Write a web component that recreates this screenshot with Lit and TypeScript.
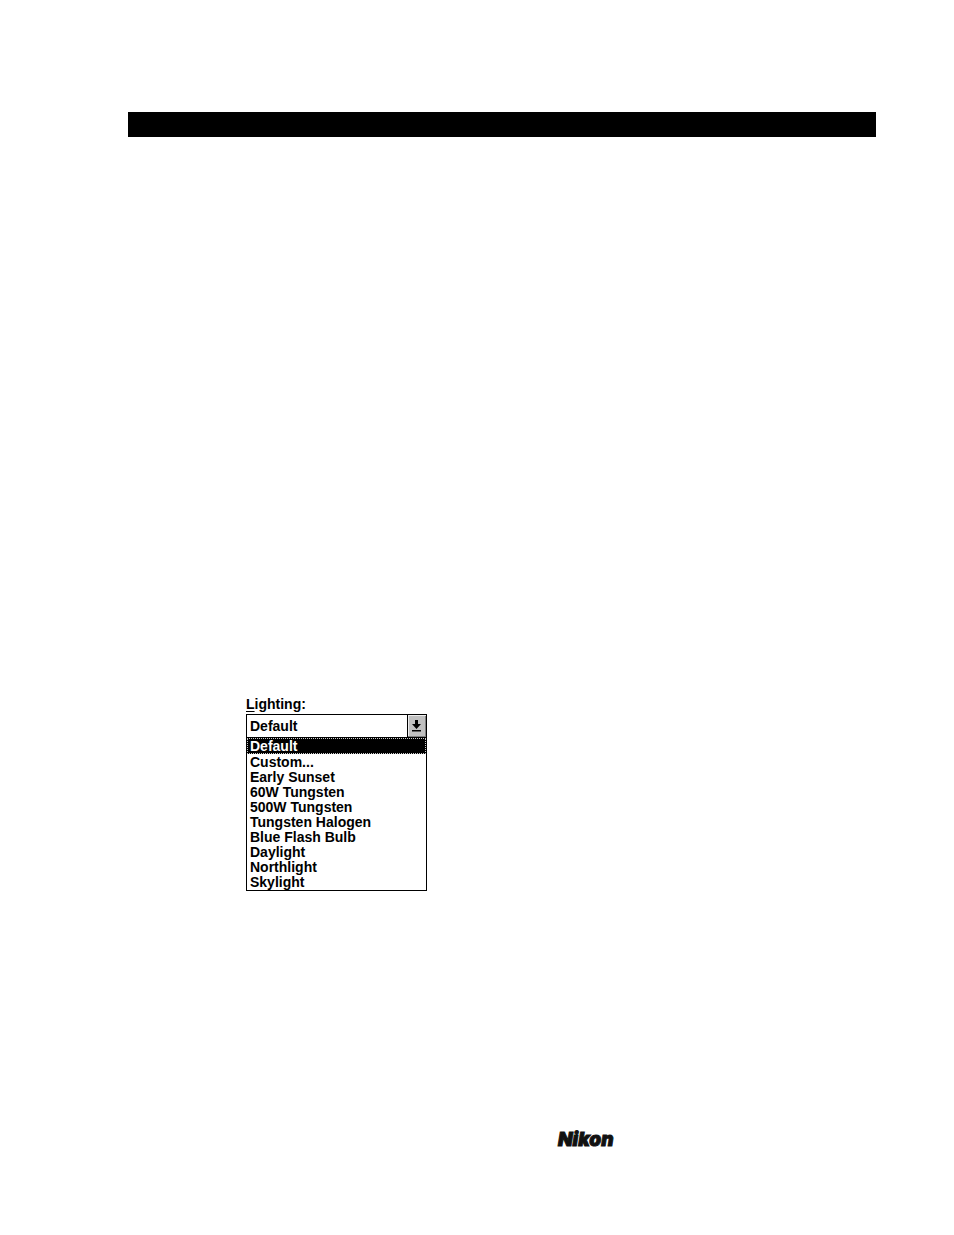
import { LitElement, html, css } from "lit";
import { customElement, state } from "lit/decorators.js";

const LIGHTING = [
  "Default",
  "Custom...",
  "Early Sunset",
  "60W Tungsten",
  "500W Tungsten",
  "Tungsten Halogen",
  "Blue Flash Bulb",
  "Daylight",
  "Northlight",
  "Skylight",
];

@customElement("lighting-picker")
export class LightingPicker extends LitElement {
  @state() private value = "Default";

  static styles = css`
    :host {
      display: block;
      width: 181px;
      color: #000;
      font: bold 14px/16px "Liberation Sans", Arial, sans-serif;
    }
    .label {
      display: block;
      margin-bottom: 2px;
    }
    .accel {
      text-decoration: underline;
      text-underline-offset: 2px;
      text-decoration-skip-ink: none;
    }
    .combo {
      display: grid;
      grid-template-columns: 1fr 19px;
      height: 24px;
      box-sizing: border-box;
      border: 1px solid #000;
    }
    .current {
      grid-area: 1 / 1 / 2 / 3;
      appearance: none;
      margin: 0;
      padding: 0 22px 0 3px;
      border: 0;
      border-radius: 0;
      outline: 0;
      background: #fff;
      color: #000;
      font: inherit;
    }
    .arrow {
      grid-area: 1 / 2;
      width: 19px;
      height: 22px;
      pointer-events: none;
    }
    .list {
      display: block;
      appearance: none;
      width: 100%;
      height: 153px;
      box-sizing: border-box;
      margin: 0;
      padding: 0;
      border: 1px solid #000;
      border-top: 0;
      border-radius: 0;
      outline: 0;
      overflow: hidden;
      background: #fff;
      color: #000;
      font: inherit;
      scrollbar-width: none;
    }
    .item {
      box-sizing: border-box;
      height: 15px;
      min-height: 15px;
      padding: 0 3px;
      font-weight: bold;
      line-height: 15px;
      color: #000;
    }
    .item:checked {
      height: 16px;
      background: #000 linear-gradient(#000, #000);
      color: #fff;
      outline: 1px dotted #ccc;
      outline-offset: -1px;
    }
  `;

  private pick(e: Event) {
    this.value = (e.target as HTMLSelectElement).value;
  }

  private options() {
    return LIGHTING.map(
      (name) =>
        html`<option class="item" value=${name} .selected=${name === this.value}>${name}</option>`
    );
  }

  render() {
    return html`
      <label class="label" for="current"><span class="accel">L</span>ighting:</label>
      <div class="combo">
        <select id="current" class="current" @change=${this.pick}>
          ${this.options()}
        </select>
        <svg class="arrow" viewBox="0 0 19 22" aria-hidden="true">
          <path d="M0 0h19v22H0z" fill="#c0c0c0" />
          <path d="M0 0h1v22H0z" fill="#000" />
          <path d="M1 0h18v1H2v20H1z" fill="#eee" />
          <path d="M18 1h1v21H1v-1h17z" fill="#808080" />
          <path d="M8 5h3v4h3l-4.500 5L5 9h3zM5 15h9v1.500H5z" fill="#000" />
        </svg>
      </div>
      <select class="list" size="10" aria-label="Lighting presets" @change=${this.pick}>
        ${this.options()}
      </select>
    `;
  }
}

@customElement("app-root")
export class AppRoot extends LitElement {
  static styles = css`
    :host {
      display: block;
      background: #fff;
    }
    .page {
      padding: 112px 78px 84px 128px;
    }
    .rule {
      height: 25px;
      background: #000;
    }
    .figure {
      padding: 559px 0 238px 118px;
    }
    .brand {
      padding-left: 430px;
      color: #111;
      font: italic 900 19px/22px Inter, "Liberation Sans", sans-serif;
      -webkit-text-stroke: 1px #111;
    }
  `;

  render() {
    return html`
      <main class="page">
        <header class="rule"></header>
        <section class="figure"><lighting-picker></lighting-picker></section>
        <footer class="brand">Nikon</footer>
      </main>
    `;
  }
}
